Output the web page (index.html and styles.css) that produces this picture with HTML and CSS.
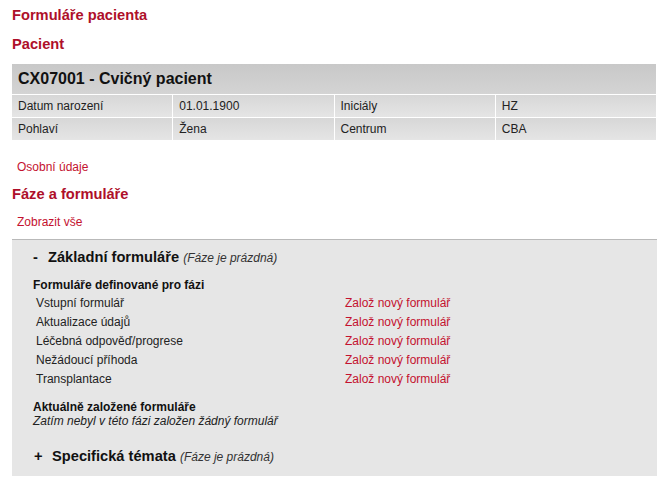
FILE: index.html
```html
<!DOCTYPE html>
<html lang="cs">
<head>
<meta charset="utf-8">
<title>Formuláře pacienta</title>
<link rel="stylesheet" href="styles.css">
</head>
<body>
<div class="page">
  <h1 class="title">Formuláře pacienta</h1>
  <h2 class="title title-sub">Pacient</h2>
  <table class="patient">
    <tr><th colspan="4" class="patient-head">CX07001 - Cvičný pacient</th></tr>
    <tr><td>Datum narození</td><td>01.01.1900</td><td>Iniciály</td><td>HZ</td></tr>
    <tr><td>Pohlaví</td><td>Žena</td><td>Centrum</td><td>CBA</td></tr>
  </table>
  <a class="link link-personal" href="#">Osobní údaje</a>
  <h2 class="title title-phases">Fáze a formuláře</h2>
  <a class="link link-all" href="#">Zobrazit vše</a>
  <div class="phases">
    <div class="phase-head"><span class="toggle toggle-minus">-</span><span class="phase-name">Základní formuláře</span> <span class="phase-note">(Fáze je prázdná)</span></div>
    <div class="label">Formuláře definované pro fázi</div>
    <div class="forms">
      <span class="form-name">Vstupní formulář</span><a class="link" href="#">Založ nový formulář</a>
      <span class="form-name">Aktualizace údajů</span><a class="link" href="#">Založ nový formulář</a>
      <span class="form-name">Léčebná odpověď/progrese</span><a class="link" href="#">Založ nový formulář</a>
      <span class="form-name">Nežádoucí příhoda</span><a class="link" href="#">Založ nový formulář</a>
      <span class="form-name">Transplantace</span><a class="link" href="#">Založ nový formulář</a>
    </div>
    <div class="label label-current">Aktuálně založené formuláře</div>
    <div class="empty">Zatím nebyl v této fázi založen žádný formulář</div>
    <div class="phase-head phase-head-second"><span class="toggle toggle-plus">+</span><span class="phase-name">Specifická témata</span> <span class="phase-note">(Fáze je prázdná)</span></div>
  </div>
</div>
</body>
</html>
```
FILE: styles.css
```css
html, body {
  margin: 0;
  padding: 0;
  background: #fff;
}
body {
  font-family: "Liberation Sans", Arial, sans-serif;
  font-size: 12px;
  color: #222;
  overflow: hidden;
}
.page {
  padding: 7px 0 0 12px;
  width: 645px;
}
.title {
  margin: 0;
  font-size: 14.67px;
  line-height: 17px;
  font-weight: bold;
  color: #ae0f2a;
}
.title-sub {
  margin-top: 12px;
}
.patient {
  margin: 10px 0 0 -1px;
  border-collapse: separate;
  border-spacing: 1px;
  width: 646px;
  table-layout: fixed;
}
.patient td,
.patient th {
  padding: 0 0 0 6px;
  text-align: left;
}
.patient td {
  height: 22px;
  font-size: 12px;
  line-height: 14px;
  color: #222;
  background: linear-gradient(#d7d7d7, #e5e5e5);
}
.patient-head {
  height: 30px;
  font-size: 16px;
  line-height: 18px;
  font-weight: bold;
  color: #111;
  background: linear-gradient(#c8c8c8, #d4d4d4);
}
.link {
  color: #c4122f;
  text-decoration: none;
  font-size: 12px;
  line-height: 14px;
}
.link-personal,
.link-all {
  display: block;
  padding-left: 5px;
}
.link-personal {
  margin-top: 19px;
}
.title-phases {
  margin-top: 12px;
}
.link-all {
  margin-top: 12px;
}
.phases {
  margin-top: 10px;
  border-top: 1px solid #b9b9b9;
  background: #e6e6e6;
  padding: 9px 0 10px 21px;
  width: 624px;
}
.phase-head {
  font-size: 14.67px;
  line-height: 17px;
  color: #111;
}
.phase-head-second {
  margin-top: 20px;
}
.toggle {
  display: inline-block;
  font-weight: bold;
}
.toggle-minus {
  width: 15px;
}
.toggle-plus {
  width: 18px;
  padding-left: 1px;
}
.phase-name {
  font-weight: bold;
}
.phase-note {
  font-size: 12px;
  font-style: italic;
  color: #333;
}
.label {
  margin-top: 11px;
  font-weight: bold;
  line-height: 14px;
  color: #111;
}
.forms {
  display: grid;
  grid-template-columns: 309px auto;
  line-height: 19px;
  padding: 2px 0 0 3px;
}
.forms .link {
  line-height: 19px;
}
.form-name {
  color: #222;
}
.label-current {
  margin-top: 11px;
}
.empty {
  font-style: italic;
  line-height: 14px;
  color: #222;
}
```
